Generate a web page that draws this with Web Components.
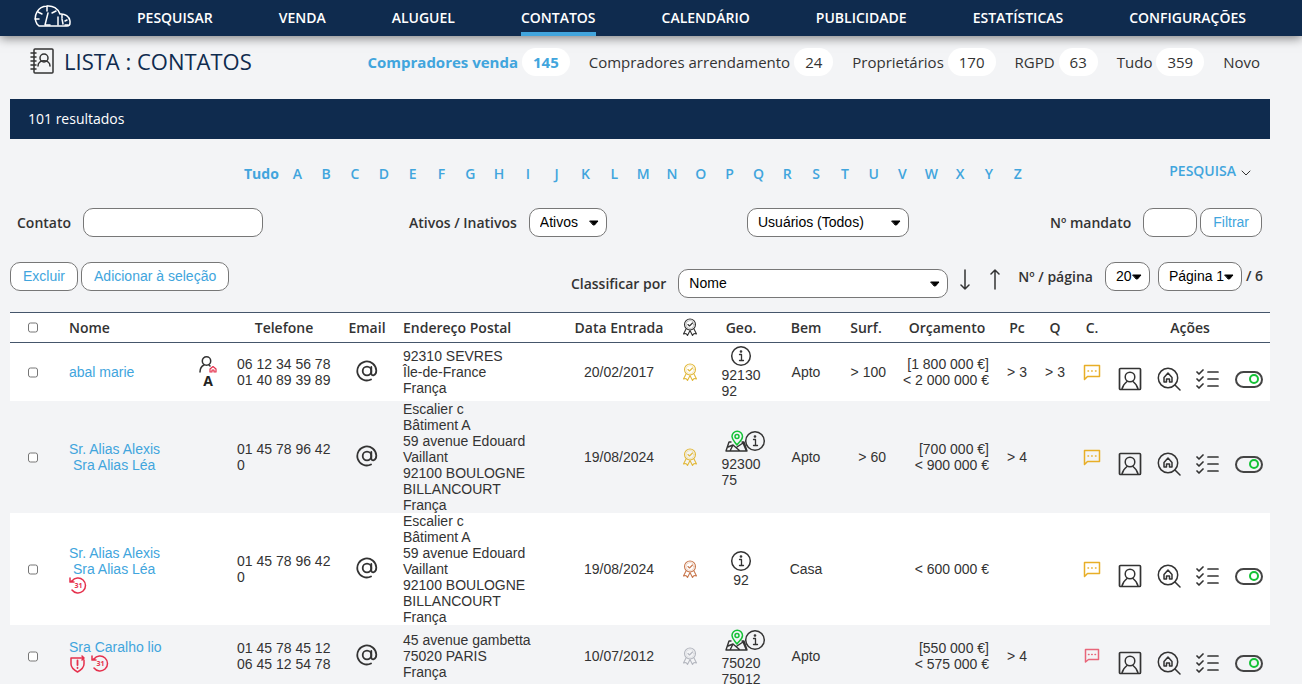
<!DOCTYPE html>
<html lang="pt">
<head>
<meta charset="utf-8">
<title>Lista : Contatos</title>
<style>
  body {
    margin: 0;
    background: #f3f4f6;
    color: #333;
    font: 14px/16px "Liberation Sans", Arial, sans-serif;
    --ui: "Open Sans", "Noto Sans", sans-serif;
    --navy: #0f2b4e;
    --blue: #41a5dd;
    --line: #777;
  }
</style>
</head>
<body>
<contacts-app></contacts-app>

<script>
const ICONS = {
  gauge: [37, 22, `
    <path d="M5 21h28a3 3 0 0 0 3-3v-2a9 8 0 0 0-10-7A12 12 0 0 0 13 1 12 12 0 0 0 3 19l2 2h6"/>
    <path d="M13 1v5M4 7l4 2M22 6l-4 2M1 14h4M11 20l3-12M12 20h4M24 12v8M28 10v3M31 20h3M33 15l-2 1M29 19l-1-5"/>`],
  book: [24, 26, `
    <rect x="4" y="1" width="19" height="24" rx="1"/>
    <path d="M1 5h5M1 9h5M1 13h5M1 17h5M1 21h5M8 18c0-7 12-7 12 0"/>
    <circle cx="14" cy="10" r="4"/>`],
  chevron: [10, 6, `<path d="M1 1l4 4 4-4" stroke-width="1"/>`],
  down: [10, 21, `<path d="M5 1v19M1 16l4 4 4-4"/>`],
  up: [10, 21, `<path d="M5 20V1M1 5l4-4 4 4"/>`],
  ribbon: [16, 18, `
    <g stroke-width="1.1"><circle cx="8" cy="6.500" r="5.500"/><circle cx="8" cy="6.500" r="4" stroke-width=".3"/>
    <path d="M6 6.500l1.500 1.500L10.500 5M4 11l-2.500 5 2.500-.5 1.500 2L8 12.500l2.500 5 1.500-2 2.500.5L12 11"/></g>`],
  at: [22, 22, `
    <g stroke-width="1.800"><circle cx="11" cy="11" r="4.300"/>
    <path d="M15.300 7v6.500c0 3 5 2.500 5-3A9.500 9.500 0 1 0 15 19.500"/></g>`],
  info: [22, 22, `
    <circle cx="11" cy="11" r="9.300"/>
    <path d="M9.500 9.500h2V15M9.500 15.500h4" stroke-width="1.300"/><circle cx="11" cy="6.500" r=".6"/>`],
  map: [23, 22, `
    <path d="M6 12H4L1 21h21l-3-9h-2M3 17l5-2 7 6M8 15l-3 6M12 17l6-4 3 7" stroke-width="1.400"/>
    <g stroke="#14c236"><path d="M12 15c-2-3-5-5-5-8.500a5 5 0 0 1 10.500 0C17.500 10 14 12 12 15z"/><circle cx="12" cy="6.500" r="2"/></g>`],
  chat: [18, 17, `
    <path d="M1.500 1.500h15v11h-12l-3 3z"/>
    <path d="M5 7h.5M8.700 7h.5M12.500 7h.5"/>`],
  chatSmall: [16, 15, `
    <path d="M1.500 1.500h13v10h-10l-3 2.500z"/>
    <path d="M4.500 6.500h.5M7.700 6.500h.5M11 6.500h.5"/>`],
  person: [24, 24, `
    <rect x="1.500" y="1.500" width="21" height="21" rx="1" stroke-width="1.700"/><circle cx="12" cy="10" r="4.800"/>
    <path d="M4 22c1-4 3-6 5-7.500M20 22c-1-4-3-6-5-7.500"/>`],
  searchHome: [24, 24, `
    <circle cx="11" cy="11" r="9.700"/><path d="M18 18l5 5M7 10.500l4-4.500 4 4.500V15h-2.500v-3h-3v3H7z"/>`],
  checks: [24, 22, `
    <path d="M1 4l2 2 4-4M1 11l2 2 4-4M1 18l2 2 4-4M12 4h10M12 11h10M12 18h10" stroke-width="1.700"/>`],
  userHome: [18, 17, `
    <circle cx="7.500" cy="5" r="4.200"/><path d="M1 16c0-4 2-6 4-7M10 9l1 1"/>
    <path d="M11 16v-3l3-2.500 3 2.500v3h-2v-2h-2v2z" stroke="#e5304c" stroke-width="1.200"/>`],
  days: [18, 17, `
    <path d="M3 4a7.500 7.500 0 1 1 0 9M1 1v4h4M1 5l3-2"/>
    <text x="9.500" y="11" text-anchor="middle" fill="currentColor" stroke="none" font-family="Open Sans, sans-serif" font-weight="700" font-size="7">31</text>`],
  shield: [18, 18, `
    <path d="M14 3H2v6c0 4 3 6 6.500 8 3.500-2 6.500-4 6.500-8V5M13 1l2 2-2 2"/><path d="M8.500 5.500v4.500M8.500 12.700v.3" stroke-width="1.800"/>`],
  caret: [10, 6, `<path d="M1 1h8L5.500 5h-1z" fill="currentColor" stroke-width="1"/>`]
};

class AppIcon extends HTMLElement {
  connectedCallback() {
    const [w, h, shape] = ICONS[this.getAttribute('name')];
    this.attachShadow({ mode: 'open' }).innerHTML = `
      <style>
        :host { display: inline-block; vertical-align: top; }
        svg { display: block; }
      </style>
      <svg width="${w}" height="${h}" viewBox="0 0 ${w} ${h}" fill="none" stroke="currentColor"
        stroke-width="1.500" stroke-linecap="round" stroke-linejoin="round" aria-hidden="true">${shape}</svg>
    `;
  }
}
customElements.define('app-icon', AppIcon);

class MainNav extends HTMLElement {
  connectedCallback() {
    const items = ['PESQUISAR', 'VENDA', 'ALUGUEL', 'CONTATOS', 'CALENDÁRIO', 'PUBLICIDADE', 'ESTATÍSTICAS', 'CONFIGURAÇÕES'];
    this.attachShadow({ mode: 'open' }).innerHTML = `
      <style>
        :host { display: block; background: var(--navy); box-shadow: 0 2px 10px rgba(0, 0, 0, .5); }
        nav { display: flex; justify-content: space-between; padding: 0 56px 0 34px; }
        a {
          color: #fff;
          font: 600 14px/32px var(--ui);
          text-decoration: none;
          padding-top: 2px;
          border-bottom: 4px solid transparent;
          height: 30px;
        }
        a.logo { padding-top: 5px; height: 27px; }
        a.on { border-color: var(--blue); }
      </style>
      <nav>
        <a class="logo" href="#" aria-label="Painel"><app-icon name="gauge"></app-icon></a>
        ${items.map(t => `<a href="#"${t === 'CONTATOS' ? ' class="on"' : ''}>${t}</a>`).join('')}
      </nav>
    `;
  }
}
customElements.define('main-nav', MainNav);

class CountTab extends HTMLElement {
  connectedCallback() {
    const count = this.getAttribute('count');
    this.attachShadow({ mode: 'open' }).innerHTML = `
      <style>
        :host { display: block; }
        a { display: flex; gap: 4px; color: #333; font: 15px/28px var(--ui); text-decoration: none; white-space: nowrap; }
        b { background: #fff; border-radius: 14px; padding: 0 11px; font-weight: inherit; }
        :host([active]) a { color: var(--blue); font-weight: 700; }
      </style>
      <a href="#"><slot></slot>${count ? `<b>${count}</b>` : ''}</a>
    `;
  }
}
customElements.define('count-tab', CountTab);

class PageHeading extends HTMLElement {
  connectedCallback() {
    this.attachShadow({ mode: 'open' }).innerHTML = `
      <style>
        :host { display: flex; justify-content: space-between; padding: 12px 10px 23px 20px; }
        h1 { display: flex; gap: 10px; margin: 0; font: 500 22px/26px var(--ui); color: var(--navy); white-space: nowrap; }
        app-icon { color: #333; }
        div { display: flex; gap: 19px; }
      </style>
      <h1><app-icon name="book"></app-icon>LISTA : CONTATOS</h1>
      <div><slot></slot></div>
    `;
  }
}
customElements.define('page-heading', PageHeading);

class ResultBar extends HTMLElement {
  connectedCallback() {
    this.attachShadow({ mode: 'open' }).innerHTML = `
      <style>
        :host { display: block; background: var(--navy); color: #fff; font: 14px/40px var(--ui); padding: 0 18px; }
      </style>
      <slot></slot>
    `;
  }
}
customElements.define('result-bar', ResultBar);

class LetterIndex extends HTMLElement {
  connectedCallback() {
    this.attachShadow({ mode: 'open' }).innerHTML = `
      <style>
        :host { display: grid; grid-template-columns: 234px 1fr 238px; padding: 22px 0 24px; font: 600 14px/20px var(--ui); }
        nav { grid-column: 2; display: flex; padding-top: 3px; }
        a { flex: 1; text-align: center; color: var(--blue); text-decoration: none; }
        a.all { flex: 0 0 39px; text-align: left; font-weight: 700; }
        button { justify-self: end; display: flex; align-items: center; gap: 5px; height: 20px; margin-right: 19px;
          padding: 0; border: 0; background: none; color: var(--blue); font: inherit; }
        app-icon { color: #333; padding-top: 3px; }
      </style>
      <nav>
        <a class="all" href="#">Tudo</a>
        ${[...'ABCDEFGHIJKLMNOPQRSTUVWXYZ'].map(l => `<a href="#">${l}</a>`).join('')}
      </nav>
      <button type="button">PESQUISA <app-icon name="chevron"></app-icon></button>
    `;
  }
}
customElements.define('letter-index', LetterIndex);

const FIELD = `
  label { display: flex; align-items: center; gap: 12px; font: 600 14px/20px var(--ui); white-space: nowrap; }
  input, select, button {
    box-sizing: border-box;
    height: 29px;
    margin: 0;
    padding: 0 10px 2px;
    border: 1px solid var(--line);
    border-radius: 10px;
    background: #fff;
    color: #000;
    font: 14px "Liberation Sans", Arial, sans-serif;
  }
  button { padding: 0 12px 2px; color: var(--blue); }
`;

class DropDown extends HTMLElement {
  connectedCallback() {
    const label = this.getAttribute('label');
    this.attachShadow({ mode: 'open' }).innerHTML = `
      <style>
        ${FIELD}
        :host { display: block; }
        .box { display: grid; align-items: center; width: var(--w); }
        select { grid-area: 1 / 1; width: 100%; appearance: none; padding-right: 0; }
        app-icon { grid-area: 1 / 1; justify-self: end; margin-right: 8px; color: #000; pointer-events: none; }
      </style>
      <label>${label || ''}
        <span class="box">
          <select aria-label="${label || this.getAttribute('value')}"><option>${this.getAttribute('value')}</option></select>
          <app-icon name="caret"></app-icon>
        </span>
      </label>
    `;
    if (!label) this.shadowRoot.querySelector('label').style.gap = '0';
  }
}
customElements.define('drop-down', DropDown);

class FilterBar extends HTMLElement {
  connectedCallback() {
    this.attachShadow({ mode: 'open' }).innerHTML = `
      <style>
        ${FIELD}
        :host { display: grid; grid-template-columns: 392fr 338fr 303fr 212fr; padding: 0 8px 25px 7px; }
        div { display: flex; gap: 3px; justify-content: end; }
        #contact { width: 180px; }
        #mandate { width: 54px; }
      </style>
      <label>Contato <input id="contact" type="text"></label>
      <drop-down label="Ativos / Inativos" value="Ativos" style="--w: 78px"></drop-down>
      <drop-down value="Usuários (Todos)" style="--w: 162px"></drop-down>
      <div>
        <label>Nº mandato <input id="mandate" type="text"></label>
        <button type="button">Filtrar</button>
      </div>
    `;
  }
}
customElements.define('filter-bar', FilterBar);

class ListTools extends HTMLElement {
  connectedCallback() {
    this.attachShadow({ mode: 'open' }).innerHTML = `
      <style>
        ${FIELD}
        :host { display: flex; justify-content: space-between; padding: 0 7px 14px 0; }
        div { display: flex; align-items: flex-start; }
        .bulk { gap: 3px; }
        .sort { padding-top: 7px; }
        .arrow { width: 30px; padding: 0; border: 0; background: none; color: #333; }
        .arrow app-icon { display: block; width: 10px; margin: 0 auto; }
        .order { margin-left: 2px; padding-top: 3px; }
        .pages { gap: 8px; margin-left: 8px; }
        .total { display: flex; gap: 4px; font: 600 14px/28px var(--ui); }
      </style>
      <div class="bulk">
        <button type="button">Excluir</button>
        <button type="button">Adicionar à seleção</button>
      </div>
      <div>
        <drop-down class="sort" label="Classificar por" value="Nome" style="--w: 270px"></drop-down>
        <div class="order">
          <button class="arrow" type="button" aria-label="Decrescente"><app-icon name="down"></app-icon></button>
          <button class="arrow" type="button" aria-label="Crescente"><app-icon name="up"></app-icon></button>
        </div>
        <div class="pages">
          <drop-down label="Nº / página" value="20" style="--w: 45px"></drop-down>
          <span class="total"><drop-down value="Página 1" style="--w: 84px"></drop-down>/ 6</span>
        </div>
      </div>
    `;
  }
}
customElements.define('list-tools', ListTools);

const BOULOGNE = ['Escalier c', 'Bâtiment A', '59 avenue Edouard Vaillant', '92100 BOULOGNE BILLANCOURT', 'França'];
const CONTACTS = [
  { name: ['abal marie'], owner: true, flags: [], tel: '06 12 34 56 78<br>01 40 89 39 89', address: ['92310 SEVRES', 'Île-de-France', 'França'],
    date: '20/02/2017', medal: '#e2b93c', geo: ['92130', '92'], kind: 'Apto', surf: '> 100', budget: '[1 800 000 €]<br>&lt; 2 000 000 €', pc: '> 3', q: '> 3' },
  { name: ['Sr. Alias Alexis', 'Sra Alias Léa'], flags: [], tel: '01 45 78 96 42 0', address: BOULOGNE,
    date: '19/08/2024', medal: '#e2b93c', map: true, geo: ['92300', '75'], kind: 'Apto', surf: '> 60', budget: '[700 000 €]<br>&lt; 900 000 €', pc: '> 4', q: '' },
  { name: ['Sr. Alias Alexis', 'Sra Alias Léa'], flags: ['days'], tel: '01 45 78 96 42 0', address: BOULOGNE,
    date: '19/08/2024', medal: '#c9794f', geo: ['92'], kind: 'Casa', surf: '', budget: '&lt; 600 000 €', pc: '', q: '' },
  { name: ['Sra Caralho lio'], flags: ['shield', 'days'], tel: '01 45 78 45 12<br>06 45 12 54 78', address: ['45 avenue gambetta', '75020 PARIS', 'França'],
    date: '10/07/2012', medal: '#b4b7bf', map: true, geo: ['75020', '75012'], kind: 'Apto', surf: '', budget: '[550 000 €]<br>&lt; 575 000 €', pc: '> 4', q: '', alert: true }
];

class ContactsTable extends HTMLElement {
  row(c) {
    return `
      <tr>
        <td class="mid"><input type="checkbox" aria-label="Selecionar ${c.name[0]}"></td>
        <td class="name">
          ${c.name.map((n, i) => `<a href="#">${i ? '&nbsp;' : ''}${n}</a>`).join('')}
          ${c.flags.length ? `<span class="flags">${c.flags.map(f => `<app-icon name="${f}"></app-icon>`).join('')}</span>` : ''}
        </td>
        <td class="mid">${c.owner ? '<app-icon name="userHome"></app-icon><b>A</b>' : ''}</td>
        <td class="tel">${c.tel}</td>
        <td class="mid"><a class="at" href="#" aria-label="Email"><app-icon name="at"></app-icon></a></td>
        <td class="address">${c.address.join('<br>')}</td>
        <td class="mid">${c.date}</td>
        <td class="mid"><app-icon name="ribbon" style="color: ${c.medal}"></app-icon></td>
        <td class="mid">
          <span class="pins${c.map ? ' two' : ''}">${c.map ? '<app-icon name="map"></app-icon>' : ''}<app-icon name="info"></app-icon></span>
          <span class="zip">${c.geo.join('<br>')}</span>
        </td>
        <td class="mid">${c.kind}</td>
        <td class="num">${c.surf}</td>
        <td class="num budget">${c.budget}</td>
        <td class="mid">${c.pc}</td>
        <td class="mid">${c.q}</td>
        <td class="mid">${c.alert ? '<app-icon class="alert" name="chatSmall"></app-icon>' : '<app-icon class="note" name="chat"></app-icon>'}</td>
        <td class="actions">
          <div>
            <button type="button" aria-label="Ficha"><app-icon name="person"></app-icon></button>
            <button type="button" aria-label="Buscar imóveis"><app-icon name="searchHome"></app-icon></button>
            <button type="button" aria-label="Tarefas"><app-icon name="checks"></app-icon></button>
            <input class="switch" type="checkbox" checked aria-label="Ativo">
          </div>
        </td>
      </tr>`;
  }

  connectedCallback() {
    const cols = [46, 129, 46, 106, 60, 167, 110, 32, 70, 60, 60, 102, 38, 38, 36, 160];
    this.attachShadow({ mode: 'open' }).innerHTML = `
      <style>
        :host { display: block; }
        table { width: 100%; table-layout: fixed; border-spacing: 0; }
        th {
          height: 29px;
          padding: 0;
          border: solid #45566b;
          border-width: 1px 0;
          background: #fff;
          font: 600 14px/20px var(--ui);
          white-space: nowrap;
        }
        td { box-sizing: border-box; height: 58px; padding: 0; vertical-align: middle; }
        tbody tr:nth-child(odd) { background: #fff; }
        .mid { text-align: center; }
        .name { padding-left: 13px; text-align: left; }
        .name a { display: block; color: var(--blue); text-decoration: none; }
        .flags { display: flex; gap: 4px; color: #e5304c; }
        .tel { padding: 0 5px 0 6px; }
        .address { padding-left: 6px; text-align: left; }
        .num { padding-right: 10px; text-align: right; white-space: nowrap; }
        .budget { padding-right: 9px; }
        .at { display: block; padding-bottom: 2px; color: #333; }
        .note { color: #e8ae27; }
        .alert { color: #e8667a; }
        b { display: block; font: 700 14px/16px var(--ui); color: #222; }
        .pins { display: flex; justify-content: center; }
        .two { padding: 4px 0 4px 9px; }
        .two app-icon + app-icon { margin-left: -4px; }
        .zip { display: inline-block; vertical-align: top; text-align: left; }
        input { display: block; width: 10px; height: 11px; margin: 0 auto; }
        .actions { padding: 14px 7px 0 8px; }
        .actions div { display: flex; align-items: center; justify-content: space-between; }
        button { padding: 0; border: 0; background: none; color: #333; }
        .switch {
          appearance: none;
          box-sizing: border-box;
          display: flex;
          align-items: center;
          justify-content: end;
          width: 28px;
          height: 17px;
          margin: 0;
          padding-right: 2px;
          border: 2px solid #444;
          border-radius: 9px;
        }
        .switch::before { content: ""; box-sizing: border-box; width: 10px; height: 10px; border: 2px solid #14c236; border-radius: 50%; }
      </style>
      <table>
        <colgroup>${cols.map(w => `<col style="width: ${w}px">`).join('')}</colgroup>
        <thead>
          <tr>
            <th><input type="checkbox" aria-label="Selecionar todos"></th>
            <th class="name">Nome</th><th></th><th>Telefone</th><th>Email</th>
            <th class="address">Endereço Postal</th><th>Data Entrada</th>
            <th><app-icon name="ribbon"></app-icon></th>
            <th>Geo.</th><th>Bem</th><th>Surf.</th><th>Orçamento</th><th>Pc</th><th>Q</th><th>C.</th><th>Ações</th>
          </tr>
        </thead>
        <tbody>${CONTACTS.map(c => this.row(c)).join('')}</tbody>
      </table>
    `;
  }
}
customElements.define('contacts-table', ContactsTable);

class ContactsApp extends HTMLElement {
  connectedCallback() {
    this.attachShadow({ mode: 'open' }).innerHTML = `
      <style>
        :host { display: block; }
        main { margin: 0 32px 0 10px; }
      </style>
      <main-nav></main-nav>
      <main>
        <page-heading>
          <count-tab count="145" active>Compradores venda</count-tab>
          <count-tab count="24">Compradores arrendamento</count-tab>
          <count-tab count="170">Proprietários</count-tab>
          <count-tab count="63">RGPD</count-tab>
          <count-tab count="359">Tudo</count-tab>
          <count-tab>Novo</count-tab>
        </page-heading>
        <result-bar>101 resultados</result-bar>
        <letter-index></letter-index>
        <filter-bar></filter-bar>
        <list-tools></list-tools>
        <contacts-table></contacts-table>
      </main>
    `;
  }
}
customElements.define('contacts-app', ContactsApp);
</script>
</body>
</html>
